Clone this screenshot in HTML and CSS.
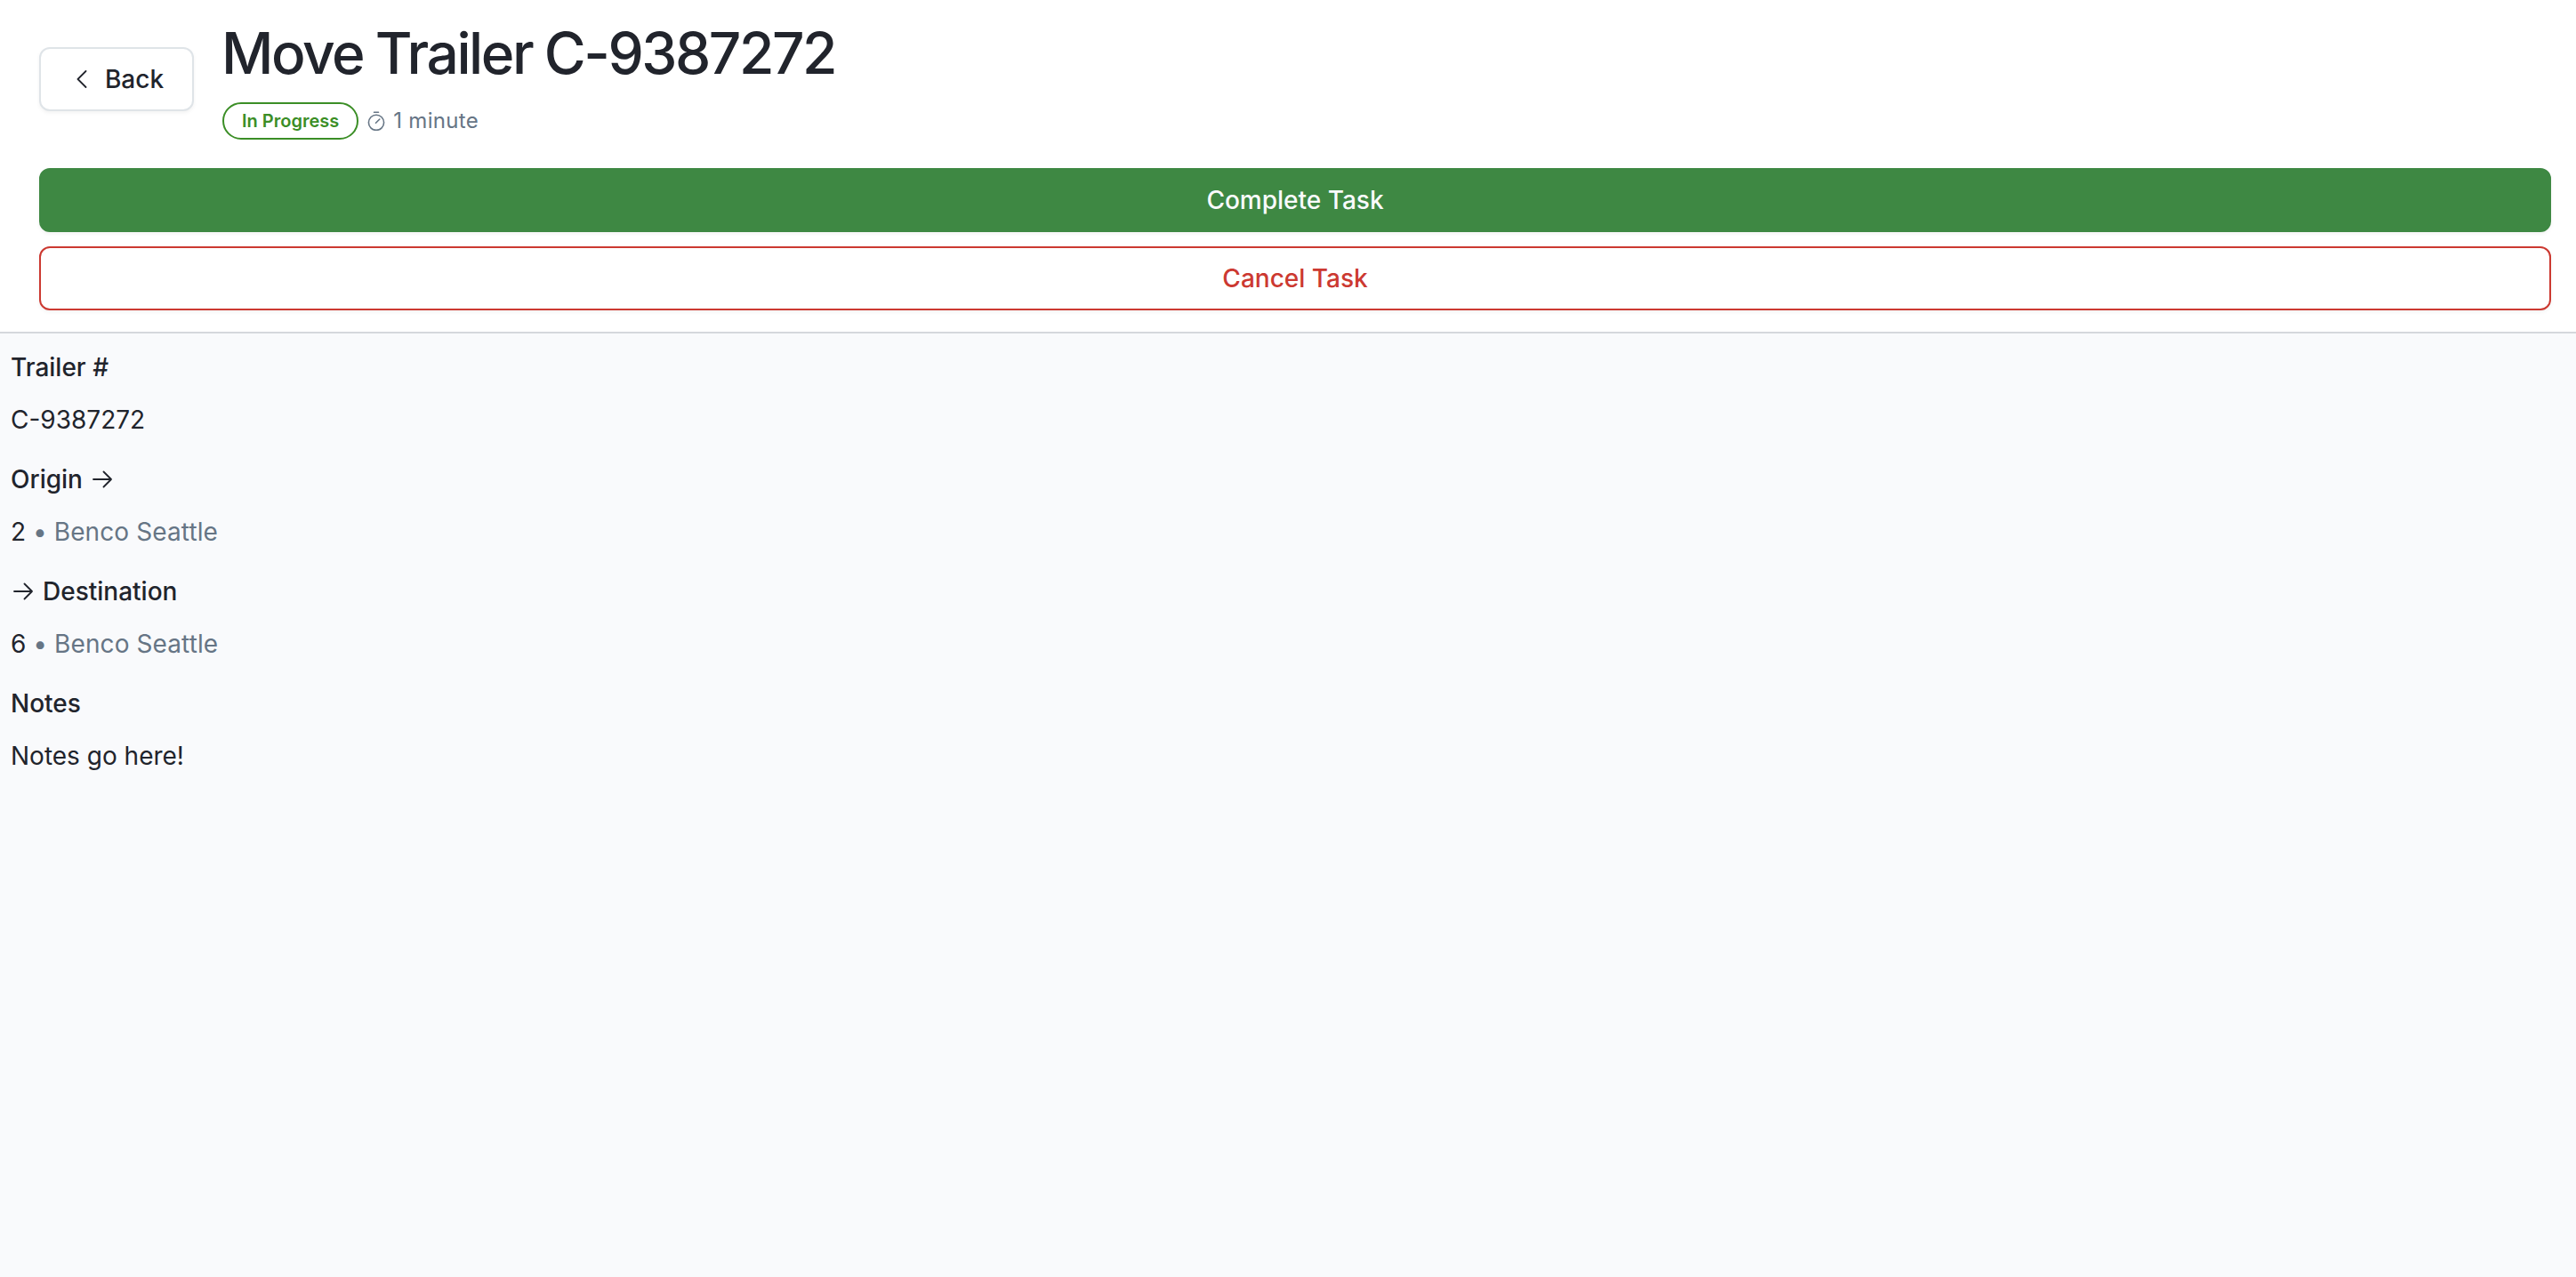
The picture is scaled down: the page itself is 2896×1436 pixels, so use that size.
FILE: index.html
```html
<!DOCTYPE html>
<html lang="en">
<head>
    <meta charset="UTF-8">
    <meta name="viewport" content="width=device-width, initial-scale=1.0">
    <title>Move Trailer C-9387272</title>
    <link rel="stylesheet" href="styles.css">
</head>
<body>
    <header class="header">
        <div class="header-top">
            <button class="button back-button">
                <svg class="back-icon" viewBox="0 0 12 20" width="12" height="20">
                    <path d="M10.5 1 L1.5 10 L10.5 19" />
                </svg>
                <span>Back</span>
            </button>
            <div class="header-info">
                <h1>Move Trailer C-9387272</h1>
                <div class="status">
                    <span class="badge">In Progress</span>
                    <svg class="timer-icon" viewBox="0 0 20 22" width="20" height="22">
                        <circle cx="10" cy="12.8" r="8.6" />
                        <path d="M7.5 1.2 H12.5 M9.5 13.3 L13.8 9" />
                    </svg>
                    <span class="duration">1 minute</span>
                </div>
            </div>
        </div>
        <div class="actions">
            <button class="button complete-button">Complete Task</button>
            <button class="button cancel-button">Cancel Task</button>
        </div>
    </header>

    <main class="details">
        <section>
            <h2>Trailer #</h2>
            <p>C-9387272</p>
        </section>
        <section>
            <h2>Origin
                <svg class="arrow after" viewBox="0 0 22 20" width="22" height="20">
                    <path d="M1 10 H21 M12.5 1.5 L21 10 L12.5 18.5" />
                </svg>
            </h2>
            <p>2 <span class="location">• Benco Seattle</span></p>
        </section>
        <section>
            <h2><svg class="arrow before" viewBox="0 0 22 20" width="22" height="20">
                    <path d="M1 10 H21 M12.5 1.5 L21 10 L12.5 18.5" />
                </svg>Destination</h2>
            <p>6 <span class="location">• Benco Seattle</span></p>
        </section>
        <section>
            <h2>Notes</h2>
            <p>Notes go here!</p>
        </section>
    </main>
</body>
</html>
```
FILE: styles.css
```css
* {
    box-sizing: border-box;
}
body {
    margin: 0;
    background-color: #f9fafc;
    color: #21242c;
    font-family: Inter, "Liberation Sans", sans-serif;
    font-size: 28px;
    line-height: 44px;
}
h1, h2, p {
    margin: 0;
}
svg {
    fill: none;
    stroke: currentColor;
    stroke-width: 1.8;
    stroke-linecap: round;
    stroke-linejoin: round;
}
.header {
    padding: 20px 28px 24px 44px;
    background-color: #fff;
    border-bottom: 2px solid #d5d8dc;
}
.header-top {
    display: flex;
    align-items: center;
    gap: 32px;
}
.header-info h1 {
    margin-left: -1px;
    font-size: 64px;
    font-weight: 500;
    line-height: 80px;
    letter-spacing: -2.45px;
    word-spacing: -1px;
}
.status {
    display: flex;
    align-items: center;
    margin-top: 15px;
    color: #667585;
}
.badge {
    height: 42px;
    padding: 0 20px;
    border: 2px solid #3b8e26;
    border-radius: 21px;
    color: #3b8e26;
    font-size: 20px;
    font-weight: 600;
    line-height: 38px;
}
.timer-icon {
    margin: 0 9px 0 10px;
    stroke-width: 1.6;
}
.duration {
    font-size: 24px;
    line-height: 40px;
    letter-spacing: 0.3px;
}
.button {
    height: 72px;
    border: 2px solid transparent;
    border-radius: 12px;
    background-color: #fff;
    box-shadow: 0 2px 4px rgba(0, 0, 0, 0.05);
    color: inherit;
    font-family: inherit;
    font-size: 28px;
    font-weight: 500;
    cursor: pointer;
}
.back-button {
    display: flex;
    align-items: center;
    justify-content: center;
    gap: 20px;
    width: 174px;
    padding: 0 0 0 8px;
    border-color: #dfe4e8;
}
.actions {
    display: flex;
    flex-direction: column;
    gap: 16px;
    margin-top: 32px;
}
.complete-button {
    background-color: #3e8843;
    border-color: #3e8843;
    color: #f9fafc;
}
.cancel-button {
    border-color: #cc3931;
    color: #cc3931;
}
.details {
    display: flex;
    flex-direction: column;
    gap: 23px;
    padding: 16px 12px;
}
.details h2 {
    display: flex;
    align-items: center;
    font-size: 28px;
    font-weight: 500;
}
.details p {
    margin-top: 15px;
}
.arrow.after {
    margin-left: 11px;
}
.arrow.before {
    margin: 0 11px 0 3px;
}
.location {
    color: #667585;
    letter-spacing: 0.1px;
}
```
